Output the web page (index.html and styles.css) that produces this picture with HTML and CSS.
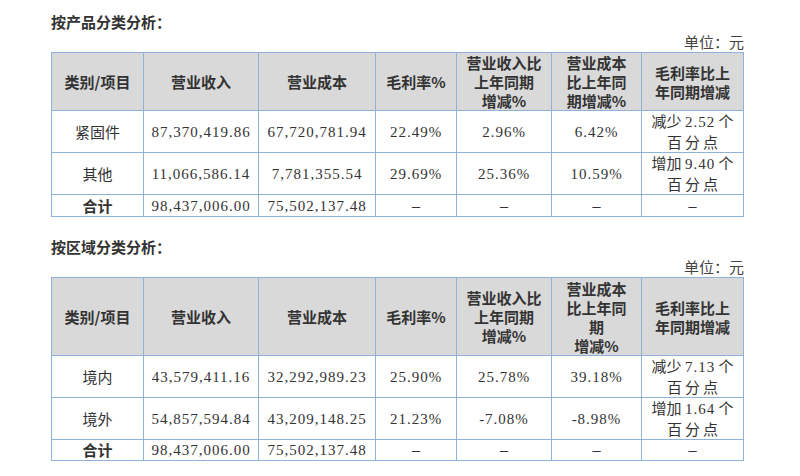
FILE: index.html
```html
<!DOCTYPE html>
<html lang="zh-CN">
<head>
<meta charset="utf-8">
<title>分类分析</title>
<link rel="stylesheet" href="styles.css">
</head>
<body>
<div class="page">
  <section class="block first">
    <div class="title">按产品分类分析：</div>
    <div class="unit">单位：元</div>
    <table class="grid">
      <colgroup>
        <col class="c1"><col class="c2"><col class="c3"><col class="c4"><col class="c5"><col class="c6"><col class="c7">
      </colgroup>
      <tr class="head h1">
        <th>类别/项目</th>
        <th>营业收入</th>
        <th>营业成本</th>
        <th>毛利率%</th>
        <th>营业收入比<br>上年同期<br>增减%</th>
        <th>营业成本<br>比上年同<br>期增减%</th>
        <th>毛利率比上<br>年同期增减</th>
      </tr>
      <tr class="row">
        <td class="name">紧固件</td>
        <td class="num">87,370,419.86</td>
        <td class="num">67,720,781.94</td>
        <td class="num">22.49%</td>
        <td class="num">2.96%</td>
        <td class="num">6.42%</td>
        <td class="chg">减少 <span class="n">2.52</span> 个<br><span class="sp">百分点</span></td>
      </tr>
      <tr class="row">
        <td class="name">其他</td>
        <td class="num">11,066,586.14</td>
        <td class="num">7,781,355.54</td>
        <td class="num">29.69%</td>
        <td class="num">25.36%</td>
        <td class="num">10.59%</td>
        <td class="chg">增加 <span class="n">9.40</span> 个<br><span class="sp">百分点</span></td>
      </tr>
      <tr class="total">
        <td class="name b">合计</td>
        <td class="num">98,437,006.00</td>
        <td class="num">75,502,137.48</td>
        <td class="dash">–</td>
        <td class="dash">–</td>
        <td class="dash">–</td>
        <td class="dash">–</td>
      </tr>
    </table>
  </section>

  <section class="block second">
    <div class="title">按区域分类分析：</div>
    <div class="unit">单位：元</div>
    <table class="grid">
      <colgroup>
        <col class="c1"><col class="c2"><col class="c3"><col class="c4"><col class="c5"><col class="c6"><col class="c7">
      </colgroup>
      <tr class="head h2">
        <th>类别/项目</th>
        <th>营业收入</th>
        <th>营业成本</th>
        <th>毛利率%</th>
        <th>营业收入比<br>上年同期<br>增减%</th>
        <th class="tall">营业成本<br>比上年同<br>期<br>增减%</th>
        <th>毛利率比上<br>年同期增减</th>
      </tr>
      <tr class="row">
        <td class="name">境内</td>
        <td class="num">43,579,411.16</td>
        <td class="num">32,292,989.23</td>
        <td class="num">25.90%</td>
        <td class="num">25.78%</td>
        <td class="num">39.18%</td>
        <td class="chg">减少 <span class="n">7.13</span> 个<br><span class="sp">百分点</span></td>
      </tr>
      <tr class="row">
        <td class="name">境外</td>
        <td class="num">54,857,594.84</td>
        <td class="num">43,209,148.25</td>
        <td class="num">21.23%</td>
        <td class="num">-7.08%</td>
        <td class="num">-8.98%</td>
        <td class="chg">增加 <span class="n">1.64</span> 个<br><span class="sp">百分点</span></td>
      </tr>
      <tr class="total t2">
        <td class="name b">合计</td>
        <td class="num">98,437,006.00</td>
        <td class="num">75,502,137.48</td>
        <td class="dash">–</td>
        <td class="dash">–</td>
        <td class="dash">–</td>
        <td class="dash">–</td>
      </tr>
    </table>
  </section>
</div>
</body>
</html>
```

FILE: styles.css
```css
html, body {
  margin: 0;
  padding: 0;
  background: #ffffff;
}

body {
  font-family: "Liberation Serif", "Noto Sans CJK SC", serif;
  color: #333333;
  font-size: 15px;
}

.page {
  padding-left: 51px;
  width: 693px;
}

.block.first {
  padding-top: 12px;
}

.block.second {
  padding-top: 20px;
}

.title {
  font-family: "Noto Sans CJK SC", sans-serif;
  font-weight: 700;
  font-size: 15px;
  line-height: 20px;
  height: 20px;
  color: #333333;
}

.unit {
  font-family: "Noto Sans CJK SC", sans-serif;
  font-size: 15px;
  line-height: 20px;
  height: 20px;
  text-align: right;
  color: #444444;
}

.grid {
  border-collapse: collapse;
  table-layout: fixed;
  width: 693px;
}

.grid .c1 { width: 92px; }
.grid .c2 { width: 115px; }
.grid .c3 { width: 117px; }
.grid .c4 { width: 81px; }
.grid .c5 { width: 95px; }
.grid .c6 { width: 90px; }
.grid .c7 { width: 102px; }

.grid th,
.grid td {
  border: 1px solid #8fb1da;
  padding: 0;
  text-align: center;
  vertical-align: middle;
  line-height: 20px;
}

.grid th {
  background: #d9d9d9;
  font-family: "Noto Sans CJK SC", sans-serif;
  font-weight: 700;
  font-size: 15px;
  line-height: 19px;
  color: #333333;
}

.grid th.tall {
  line-height: 19px;
}

.head.h1 { height: 58px; }
.head.h2 { height: 78px; }
.row { height: 40px; }
.total { height: 22px; }
.total.t2 { height: 21px; }

.num {
  font-family: "Liberation Serif", "Noto Sans CJK SC", serif;
  letter-spacing: 1px;
  color: #333333;
}

.name {
  font-family: "Noto Sans CJK SC", sans-serif;
  font-size: 15px;
}

.name.b {
  font-weight: 700;
}

.chg {
  font-family: "Noto Sans CJK SC", sans-serif;
  font-size: 15px;
  line-height: 19px;
}

.chg .n {
  font-family: "Liberation Serif", serif;
  letter-spacing: 1px;
}

.chg .sp {
  letter-spacing: 3px;
  padding-left: 3px;
}

.dash {
  font-family: "Liberation Serif", serif;
  font-size: 16px;
}
```
